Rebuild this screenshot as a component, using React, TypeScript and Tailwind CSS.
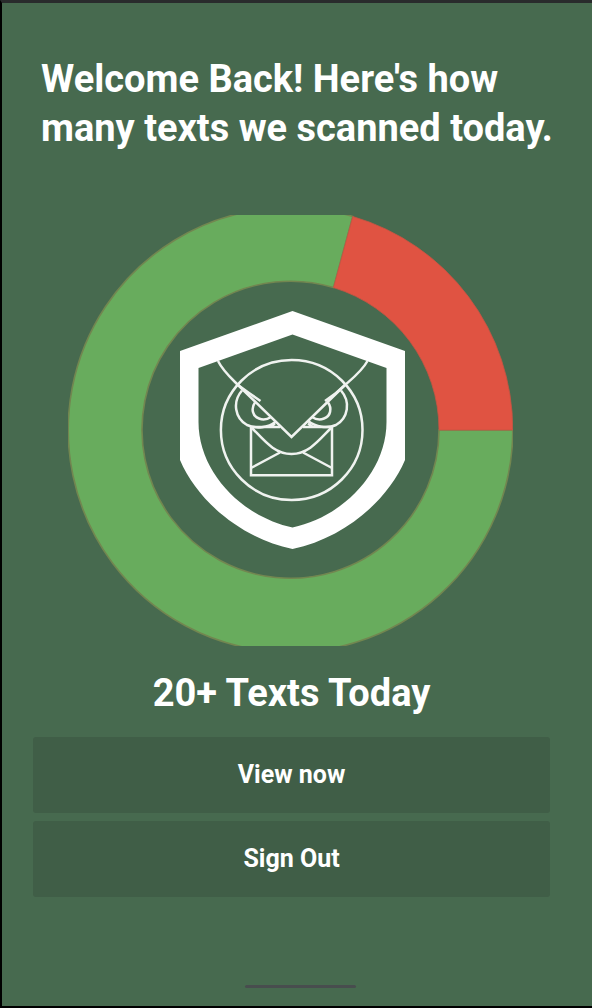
function ScanChart() {
  return (
    <svg
      viewBox="67 215 449 431"
      className="mx-auto block w-full max-w-[449px]"
      role="img"
      aria-label="Share of safe and flagged texts"
    >
      <defs>
        <clipPath id="chart-area">
          <rect x="68" y="215" width="445" height="431" />
        </clipPath>
      </defs>
      <g clipPath="url(#chart-area)" strokeWidth="1.6">
        <path
          d="M512.8 430A222.300 222.300 0 1 1 352.800 216.500L333.500 287.600A148.500 148.500 0 1 0 439 430Z"
          fill="#68ac5d"
          stroke="#728650"
        />
        <path
          d="M512.8 430A222.300 222.300 0 0 0 352.800 216.500L333.500 287.600A148.500 148.500 0 0 1 439 430Z"
          fill="#e05342"
          stroke="#c85442"
          strokeWidth="0.8"
        />
      </g>
      <path
        fill="#fff"
        fillRule="evenodd"
        d="M292.5 311L405 351V460C388 500 345 538 292.5 549C240 538 197 500 180 460V351ZM292.5 334.5L198.500 368V422C198.500 473 243 517 292.500 527.500C342 517 386.500 473 386.500 422V368Z"
      />
      <g fill="none" stroke="#f0f3f0" strokeWidth="2.5">
        <ellipse cx="291.7" cy="430" rx="70.800" ry="70" />
        <path d="M218 361C223 371 231 378 238 385L291.500 437L345 385C353 378 362 371 367.500 361" />
        <path d="M238 385L249 393L260.500 401M345 385L336 393L325 401" />
        <path d="M242 390.500C232 402 235 418 247 425C256 429 268 428 276 421.500" />
        <path d="M341 390.500C351 402 348 418 336 425C327 429 316 427 308 421" />
        <path d="M255 402.500C251 408 252 416 259 418.500C264 420.500 268 419 271 417" />
        <path d="M328 402.500C332 408 331 416 324 418.500C319 420.500 315 419 312 417" />
        <path d="M280 427H251V475.300H332V427H303M270 427L275 423.500M313 427L308 423.500" />
        <path d="M251 427C264 440 274 454 291.500 454C309 454 319 440 332 427" />
        <path d="M251 468L280 452.500M332 468L303 452.500" />
      </g>
    </svg>
  );
}

function ActionButton({ label }: { label: string }) {
  return (
    <button
      type="button"
      className="h-19 w-full rounded-[3px] bg-[#405e47] text-[25px] font-bold text-white"
    >
      {label}
    </button>
  );
}

export default function App() {
  return (
    <div className="flex min-h-screen flex-col border-t-3 border-b-2 border-l-2 border-t-[#292b2c] border-b-black border-l-black bg-[#476a4f] font-['Roboto',sans-serif] text-white">
      <main className="flex grow flex-col pt-13 pr-[42px] pl-[31px]">
        <h1 className="-mr-8 pl-2 text-[38px] leading-[49px] font-bold">
          Welcome Back! Here&apos;s how
          <br />
          many texts we scanned today.
        </h1>
        <div className="mt-[62px]">
          <ScanChart />
        </div>
        <h2 className="mt-[23px] text-center text-[38px] leading-[49px] font-bold">
          20+ Texts Today
        </h2>
        <div className="mt-[19px] flex flex-col gap-2">
          <ActionButton label="View now" />
          <ActionButton label="Sign Out" />
        </div>
      </main>
      <footer className="flex justify-center pb-[18px] pl-1.5">
        <div className="h-[3px] w-[111px] rounded-full bg-[#484d4e]" />
      </footer>
    </div>
  );
}
